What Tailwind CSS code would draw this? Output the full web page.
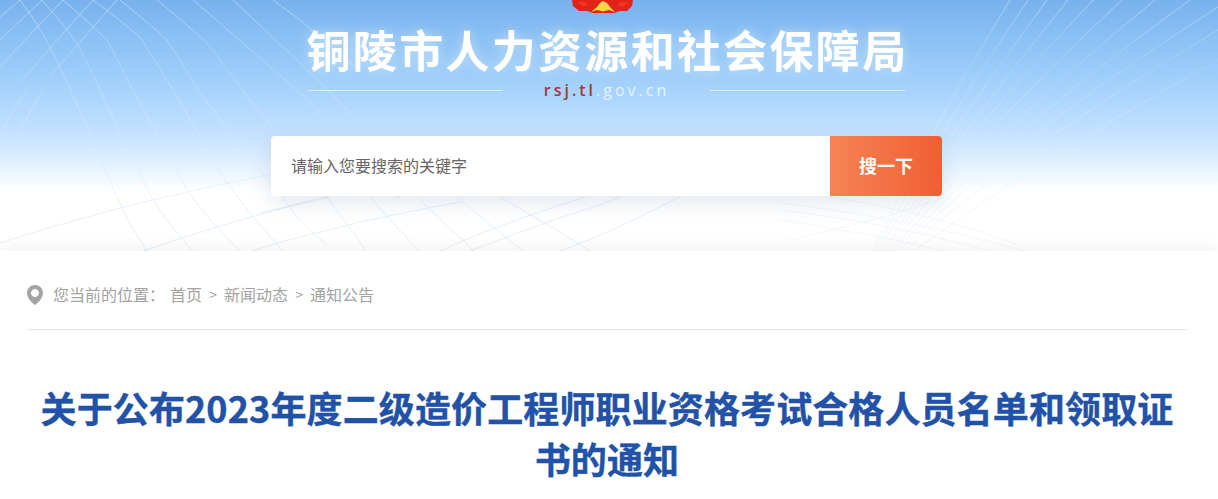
<!DOCTYPE html>
<html lang="zh-CN">
<head>
  <meta charset="UTF-8" />
  <meta name="viewport" content="width=device-width, initial-scale=1.0" />
  <script src="https://cdn.jsdelivr.net/npm/@tailwindcss/browser@4"></script>
  <title>关于公布2023年度二级造价工程师职业资格考试合格人员名单和领取证书的通知</title>
</head>

<body class="bg-white font-['Noto_Sans_CJK_SC',sans-serif]">
  <!-- Header -->
  <header class="relative h-[251px] overflow-hidden bg-[linear-gradient(180deg,#78b1ec_0%,#8ec3f5_18%,#a5d2fc_35%,#c6e2fe_54%,#e4f2ff_66%,#ffffff_76%,#ffffff_100%)]">
    <!-- background net lines -->
    <svg class="absolute inset-0" width="1218" height="251" viewBox="0 0 1218 251" fill="none">
      <defs>
        <linearGradient id="net" gradientUnits="userSpaceOnUse" x1="0" y1="0" x2="0" y2="251">
          <stop offset="0" stop-color="#ffffff" stop-opacity="0.4" />
          <stop offset="0.3" stop-color="#ffffff" stop-opacity="0.22" />
          <stop offset="0.6" stop-color="#d3e8fb" stop-opacity="0.5" />
          <stop offset="1" stop-color="#d5e5f3" stop-opacity="0.65" />
        </linearGradient>
        <linearGradient id="ray" gradientUnits="userSpaceOnUse" x1="0" y1="0" x2="0" y2="251">
          <stop offset="0" stop-color="#ffffff" stop-opacity="0.4" />
          <stop offset="0.25" stop-color="#ffffff" stop-opacity="0.12" />
          <stop offset="0.6" stop-color="#e2eefa" stop-opacity="0.4" />
          <stop offset="1" stop-color="#e4ecf5" stop-opacity="0.5" />
        </linearGradient>
      </defs>
      <g stroke="url(#net)" stroke-width="1">
        <path d="M20 0C32 16 42 32 50 47C62 72 75 100 87 127C99 155 110 182 122 208C130 224 138 238 147 251" />
        <path d="M42 0C54 14 66 28 77 43C85 58 93 74 100 90C118 127 135 164 153 200C165 218 178 236 193 251" />
        <path d="M63 0C78 13 93 26 107 40C116 56 124 73 133 90C151 124 169 157 187 190C203 212 221 233 240 251" />
        <path d="M93 0C109 12 125 24 140 37C151 54 162 72 173 90C191 121 209 152 227 183C244 206 263 229 283 251" />
        <path d="M120 0C136 13 152 26 167 40C178 57 189 75 200 93C220 119 240 145 260 170C272 184 284 198 293 212C304 224 315 235 327 245" />
        <path d="M157 0C174 14 191 28 207 43C222 62 236 81 250 100C267 122 292 150 315 180" />
        <path d="M193 0C211 15 229 31 247 47C265 62 283 78 300 93C320 112 345 140 365 165" />
        <path d="M233 0C255 21 278 42 300 63C320 82 340 102 358 122" />
        <path d="M273 0C282 7 291 13 300 20C320 37 340 53 358 70" />
        <path d="M0 17C7 11 14 6 20 0" />
        <path d="M0 40C14 27 28 13 42 0" />
        <path d="M0 67C21 44 42 22 63 0" />
        <path d="M20 83C44 55 68 27 93 0" />
        <path d="M50 77C72 51 95 25 117 0" />
        <path d="M0 133C9 118 18 104 27 90" />
        <path d="M0 167C14 141 28 115 43 90" />
        <path d="M0 243C40 230 80 219 120 208C167 196 214 186 271 174" />
        <path d="M143 251C168 242 192 235 217 227C245 219 272 211 300 203C330 195 360 188 400 197" />
        <path d="M260 213C282 208 305 203 327 198" />
        <path d="M253 251C289 238 324 232 360 222C393 215 427 208 460 202" />
        <path d="M327 197C338 212 349 227 360 242L366 251" />
        <path d="M370 197C382 211 395 225 407 238L419 251" />
        <path d="M417 197C430 210 444 222 457 235L474 251" />
        <path d="M457 197C474 211 490 225 507 238L523 251" />
        <path d="M500 197C518 207 535 218 553 228L590 251" />
        <path d="M440 251C484 231 522 218 560 205L586 197" />
        <path d="M470 251C510 236 550 220 600 205L620 197" />
        <path d="M560 251C600 237 640 217 680 197" />
      </g>
      <g stroke="url(#ray)" stroke-width="1">
        <path d="M1010 0Q917 150 850 300" />
        <path d="M1028 0Q925 150 850 300" />
        <path d="M1047 0Q935 150 850 300" />
        <path d="M1068 0Q945 150 850 300" />
        <path d="M1093 0Q950 150 850 300" />
        <path d="M1122 0Q960 150 850 300" />
        <path d="M1155 0Q970 150 850 300" />
        <path d="M1190 0Q980 150 850 300" />
        <path d="M1218 7Q985 155 850 300" />
        <path d="M1218 30Q990 165 850 300" />
        <path d="M1218 60Q1000 180 850 300" />
        <path d="M780 203C860 212 950 230 1025 251" />
        <path d="M780 210C850 218 920 232 990 251" />
        <path d="M780 220C820 226 890 238 945 251" />
        <path d="M830 197C880 205 960 222 1015 244" />
        <path d="M790 240C830 230 900 215 945 197" />
      </g>
    </svg>

    <div class="relative flex flex-col items-center pr-[5px]">
      <!-- emblem, only the bottom edge is on screen -->
      <svg width="64" height="14" viewBox="0 0 64 14" class="block mr-[7px]">
        <path d="M1 0L2 6L8 11L16 11L22 13L43 13L49 11L56 11L61 6L62 0Z" fill="#e0231b" />
        <path d="M20 12L26 7L29 3L32 1L36 3L39 7L44 12L38 10L32 11.5L26 10Z" fill="#fbd54a" />
        <path d="M6 2L14 2L17 6L11 6Z" fill="#f6341f" />
        <path d="M46 6L50 2L58 2L53 6Z" fill="#f6341f" />
      </svg>
      <h2 class="mt-[8px] ml-[2px] text-[44px] leading-[54px] font-bold tracking-[2.3px] text-white whitespace-nowrap drop-shadow-[0_0_6px_rgba(255,255,255,0.45)]">铜陵市人力资源和社会保障局</h2>
      <div class="w-[598px] flex items-center justify-between mt-[1px] h-[26px]">
        <span class="w-[195px] h-px bg-white/60"></span>
        <span class="text-[16px] leading-[26px] tracking-[3px] text-[#e6f2fd] font-['Open_Sans',sans-serif]"><span class="text-[#a8353a] font-semibold">rsj.tl</span>.gov.cn</span>
        <span class="w-[195px] h-px bg-white/60"></span>
      </div>

      <!-- Search -->
      <div class="mt-[33px] w-[671px] h-[60px] flex rounded-[4px] shadow-[0_6px_22px_rgba(70,100,150,0.16)]">
        <div class="flex-1 bg-white rounded-l-[4px] pl-[20px] pb-[2px] flex items-center text-[16px] text-[#666666]">请输入您要搜索的关键字</div>
        <button class="w-[112px] pb-[2px] rounded-r-[4px] bg-[linear-gradient(90deg,#f58453,#f15e36)] text-white text-[18px] font-bold">搜一下</button>
      </div>
    </div>
  </header>

  <!-- Main card -->
  <main class="relative bg-white shadow-[0_-4px_14px_rgba(0,0,0,0.05)] pt-[31px] pl-[27px] pr-[31px]">
    <div class="flex items-center h-[24px] text-[16px] text-[#a3a3a3]">
      <svg width="16" height="20" viewBox="0 0 16 20" class="mr-[10px] mt-[1px]">
        <path fill-rule="evenodd" d="M8 0C3.6 0 0 3.5 0 7.9C0 12.6 4.6 17.6 8 20C11.4 17.6 16 12.6 16 7.9C16 3.5 12.4 0 8 0ZM8 3.9C10.2 3.9 12 5.7 12 7.9C12 10.1 10.2 11.9 8 11.9C5.8 11.9 4 10.1 4 7.9C4 5.7 5.8 3.9 8 3.9Z" fill="#a3a3a3" />
      </svg>
      <span>您当前的位置：</span>
      <span class="ml-[5px]">首页</span>
      <span class="w-[22px] text-center text-[14px]">&gt;</span>
      <span>新闻动态</span>
      <span class="w-[22px] text-center text-[14px]">&gt;</span>
      <span>通知公告</span>
    </div>
    <div class="mt-[23px] border-b border-[#e5e5e5]"></div>

    <h1 class="mt-[52px] text-center text-[36px] leading-[51px] font-bold tracking-[0.12px] text-[#2152a8] [-webkit-text-stroke:0.4px_#2152a8]">关于公布2023年度二级造价工程师职业资格考试合格人员名单和领取证书的通知</h1>
  </main>
</body>
</html>
